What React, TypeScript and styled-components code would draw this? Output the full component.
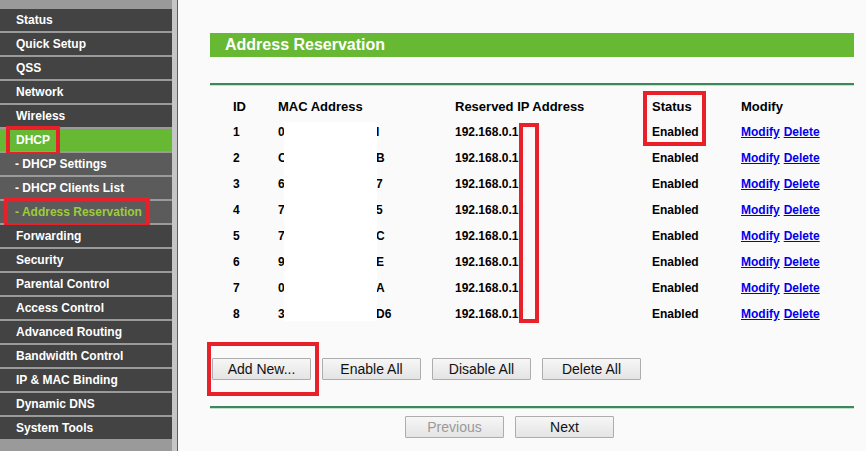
import React from "react";
import styled, { createGlobalStyle } from "styled-components";

const GlobalStyle = createGlobalStyle`
  html, body { margin: 0; padding: 0; background: #fafafa; }
  body { font-family: "Liberation Sans", Arial, sans-serif; }
  * { box-sizing: border-box; }
`;

const Page = styled.div`
  display: flex;
  width: 866px;
  height: 451px;
  overflow: hidden;
  background: #fafafa;
`;

const Sidebar = styled.nav`
  width: 178px;
  flex: none;
  background: #9a9a9a;
  padding-top: 9px;
  display: flex;
  flex-direction: column;
  gap: 2px;
  border-right: 1px solid #5e5e5e;
  box-shadow: inset -5px 0 0 #c6c6c6;
  padding-right: 5px;
`;

const NavItem = styled.div<{ $variant?: "main" | "active" | "sub" | "subActive" }>`
  position: relative;
  height: 22px;
  display: flex;
  align-items: center;
  padding-left: ${(p) => (p.$variant === "sub" || p.$variant === "subActive" ? "15px" : "16px")};
  font-size: 12px;
  font-weight: bold;
  color: ${(p) => (p.$variant === "subActive" ? "#9ccc3c" : "#ffffff")};
  background: ${(p) =>
    p.$variant === "active"
      ? "#67b934"
      : p.$variant === "sub" || p.$variant === "subActive"
      ? "#5b5b5b"
      : "#434343"};
  white-space: nowrap;
`;

const Mark = styled.div`
  position: absolute;
  border: 4px solid #e8202a;
  pointer-events: none;
`;

const Main = styled.main`
  flex: 1;
  padding: 33px 12px 0 32px;
  display: flex;
  flex-direction: column;
`;

const TitleBar = styled.div`
  height: 24px;
  background: #67b934;
  color: #ffffff;
  font-size: 16px;
  font-weight: bold;
  display: flex;
  align-items: center;
  padding-left: 15px;
`;

const Rule = styled.div<{ $top: number }>`
  margin-top: ${(p) => p.$top}px;
  height: 2px;
  background: #3a8a59;
  box-shadow: 0 1px 0 #c9ddd0;
`;

const Table = styled.div`
  position: relative;
  margin-top: 8px;
  display: flex;
  flex-direction: column;
`;

const Row = styled.div<{ $head?: boolean }>`
  height: 26px;
  display: grid;
  grid-template-columns: 45px 177px 197px 89px 1fr;
  align-items: center;
  padding-left: 23px;
  font-size: ${(p) => (p.$head ? "13px" : "12px")};
  font-weight: bold;
  color: #000000;
  white-space: nowrap;
`;

const MacCell = styled.div`
  display: grid;
  grid-template-columns: 98px auto;
`;

const Links = styled.div`
  display: flex;
  gap: 4px;
`;

const Link = styled.a`
  color: #0000ee;
  text-decoration: underline;
  cursor: pointer;
`;

const Redaction = styled.div`
  position: absolute;
  left: 74px;
  top: 29px;
  width: 93px;
  height: 199px;
  background: #ffffff;
`;

const ButtonRow = styled.div`
  position: relative;
  margin-top: 31px;
  padding-left: 2px;
  display: flex;
  gap: 11px;
`;

const Button = styled.button<{ $disabled?: boolean }>`
  width: 99px;
  height: 22px;
  padding: 0;
  font-family: "Liberation Sans", Arial, sans-serif;
  font-size: 14px;
  color: ${(p) => (p.$disabled ? "#9a9a9a" : "#111111")};
  background: linear-gradient(#f6f6f6, #e4e4e4);
  border: 1px solid #adadad;
  border-radius: 1px;
`;

const NavRow = styled.div`
  margin-top: 8px;
  padding-left: 195px;
  display: flex;
  gap: 11px;
`;

const menu: { label: string; v?: "main" | "active" | "sub" | "subActive" }[] = [
  { label: "Status" },
  { label: "Quick Setup" },
  { label: "QSS" },
  { label: "Network" },
  { label: "Wireless" },
  { label: "DHCP", v: "active" },
  { label: "- DHCP Settings", v: "sub" },
  { label: "- DHCP Clients List", v: "sub" },
  { label: "- Address Reservation", v: "subActive" },
  { label: "Forwarding" },
  { label: "Security" },
  { label: "Parental Control" },
  { label: "Access Control" },
  { label: "Advanced Routing" },
  { label: "Bandwidth Control" },
  { label: "IP & MAC Binding" },
  { label: "Dynamic DNS" },
  { label: "System Tools" },
];

const rows = [
  ["1", "0", "I"],
  ["2", "C", "B"],
  ["3", "6", "7"],
  ["4", "7", "5"],
  ["5", "7", "C"],
  ["6", "9", "E"],
  ["7", "0", "A"],
  ["8", "3", "D6"],
];

export default function App() {
  return (
    <>
      <GlobalStyle />
      <Page>
        <Sidebar>
          {menu.map((m) => (
            <NavItem key={m.label} $variant={m.v ?? "main"}>
              {m.label}
              {m.label === "DHCP" && (
                <Mark style={{ left: 6, top: -3, width: 54, height: 30 }} />
              )}
              {m.label === "- Address Reservation" && (
                <Mark style={{ left: 4, top: -4, width: 146, height: 30 }} />
              )}
            </NavItem>
          ))}
        </Sidebar>
        <Main>
          <TitleBar>Address Reservation</TitleBar>
          <Rule $top={26} />
          <Table>
            <Row $head>
              <div>ID</div>
              <div>MAC Address</div>
              <div>Reserved IP Address</div>
              <div>Status</div>
              <div>Modify</div>
            </Row>
            {rows.map(([id, a, b]) => (
              <Row key={id}>
                <div>{id}</div>
                <MacCell>
                  <span>{a}</span>
                  <span>{b}</span>
                </MacCell>
                <div>192.168.0.1</div>
                <div>Enabled</div>
                <Links>
                  <Link>Modify</Link>
                  <Link>Delete</Link>
                </Links>
              </Row>
            ))}
            <Redaction />
            <Mark style={{ left: 309, top: 30, width: 20, height: 200 }} />
            <Mark style={{ left: 433, top: -2, width: 63, height: 55 }} />
          </Table>
          <ButtonRow>
            <Button>Add New...</Button>
            <Button>Enable All</Button>
            <Button>Disable All</Button>
            <Button>Delete All</Button>
            <Mark style={{ left: -3, top: -16, width: 112, height: 54 }} />
          </ButtonRow>
          <Rule $top={26} />
          <NavRow>
            <Button $disabled>Previous</Button>
            <Button>Next</Button>
          </NavRow>
        </Main>
      </Page>
    </>
  );
}
